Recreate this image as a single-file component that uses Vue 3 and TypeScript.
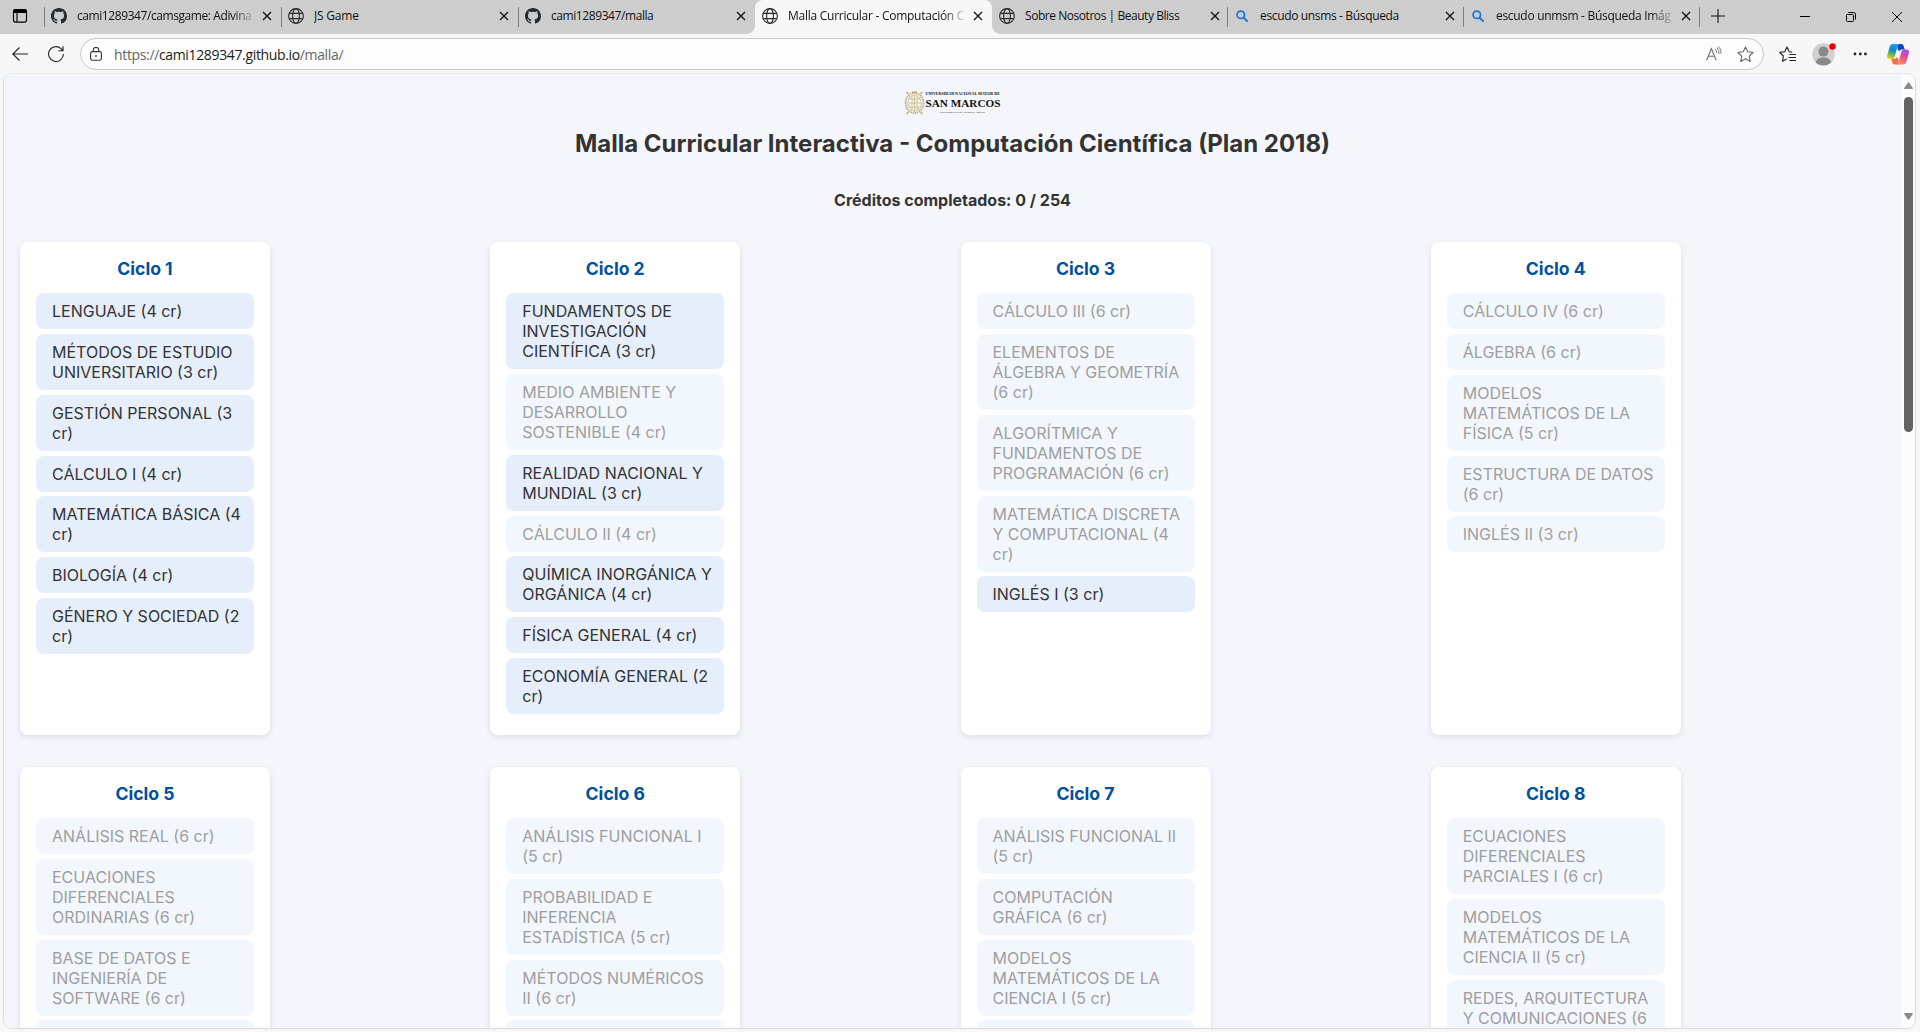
<script setup lang="ts">
interface Tab {
  title: string
  icon: 'github' | 'globe' | 'search'
  width: number
  space: string
  active?: boolean
  sep?: boolean
  fade?: boolean
}

const tabs: Tab[] = [
  { title: 'cami1289347/camsgame: Adivina', icon: 'github', width: 237, space: '-0.42px', sep: true, fade: true },
  { title: 'JS Game', icon: 'globe', width: 237, space: '-0.2px', sep: true },
  { title: 'cami1289347/malla', icon: 'github', width: 237, space: '-0.42px' },
  { title: 'Malla Curricular - Computación C', icon: 'globe', width: 237, space: '-0.26px', active: true, fade: true },
  { title: 'Sobre Nosotros | Beauty Bliss', icon: 'globe', width: 235, space: '-0.45px', sep: true },
  { title: 'escudo unsms - Búsqueda', icon: 'search', width: 236, space: '-0.35px', sep: true },
  { title: 'escudo unmsm - Búsqueda Imág', icon: 'search', width: 236, space: '-0.3px', sep: true, fade: true },
]

interface Course {
  name: string
  cr: number
  open?: boolean
}

const c = (name: string, cr: number, open = false): Course => ({ name, cr, open })

const cycles: Course[][] = [
  [
    c('LENGUAJE', 4, true),
    c('MÉTODOS DE ESTUDIO UNIVERSITARIO', 3, true),
    c('GESTIÓN PERSONAL', 3, true),
    c('CÁLCULO I', 4, true),
    c('MATEMÁTICA BÁSICA', 4, true),
    c('BIOLOGÍA', 4, true),
    c('GÉNERO Y SOCIEDAD', 2, true),
  ],
  [
    c('FUNDAMENTOS DE INVESTIGACIÓN CIENTÍFICA', 3, true),
    c('MEDIO AMBIENTE Y DESARROLLO SOSTENIBLE', 4),
    c('REALIDAD NACIONAL Y MUNDIAL', 3, true),
    c('CÁLCULO II', 4),
    c('QUÍMICA INORGÁNICA Y ORGÁNICA', 4, true),
    c('FÍSICA GENERAL', 4, true),
    c('ECONOMÍA GENERAL', 2, true),
  ],
  [
    c('CÁLCULO III', 6),
    c('ELEMENTOS DE ÁLGEBRA Y GEOMETRÍA', 6),
    c('ALGORÍTMICA Y FUNDAMENTOS DE PROGRAMACIÓN', 6),
    c('MATEMÁTICA DISCRETA Y COMPUTACIONAL', 4),
    c('INGLÉS I', 3, true),
  ],
  [
    c('CÁLCULO IV', 6),
    c('ÁLGEBRA', 6),
    c('MODELOS MATEMÁTICOS DE LA FÍSICA', 5),
    c('ESTRUCTURA DE DATOS', 6),
    c('INGLÉS II', 3),
  ],
  [
    c('ANÁLISIS REAL', 6),
    c('ECUACIONES DIFERENCIALES ORDINARIAS', 6),
    c('BASE DE DATOS E INGENIERÍA DE SOFTWARE', 6),
    c('', 0),
  ],
  [
    c('ANÁLISIS FUNCIONAL I', 5),
    c('PROBABILIDAD E INFERENCIA ESTADÍSTICA', 5),
    c('MÉTODOS NUMÉRICOS II', 6),
    c('', 0),
  ],
  [
    c('ANÁLISIS FUNCIONAL II', 5),
    c('COMPUTACIÓN GRÁFICA', 6),
    c('MODELOS MATEMÁTICOS DE LA CIENCIA I', 5),
    c('', 0),
  ],
  [
    c('ECUACIONES DIFERENCIALES PARCIALES I', 6),
    c('MODELOS MATEMÁTICOS DE LA CIENCIA II', 5),
    c('REDES, ARQUITECTURA Y COMUNICACIONES', 6),
  ],
]
</script>

<template>
  <div class="window">
    <div class="tabstrip">
      <div class="workspace">
        <svg width="16" height="16" viewBox="0 0 16 16">
          <rect x="1.5" y="1.5" width="13" height="12.6" rx="2.2" fill="none" stroke="#000" stroke-width="1.1" />
          <path d="M1 5V3.4A2.4 2.4 0 0 1 3.4 1h9.2A2.4 2.4 0 0 1 15 3.4V5z" fill="#000" />
          <path d="M5 4v10" stroke="#000" stroke-width="1.1" />
        </svg>
      </div>
      <div
        v-for="(t, i) in tabs"
        :key="i"
        class="tab"
        :class="{ active: t.active, sep: t.sep }"
        :style="{ width: t.width + 'px' }"
      >
        <svg v-if="t.icon === 'github'" class="fav" viewBox="0 0 16 16">
          <path
            fill="#24292f"
            d="M8 0C3.58 0 0 3.58 0 8c0 3.54 2.29 6.53 5.47 7.59.4.07.55-.17.55-.38 0-.19-.01-.82-.01-1.49-2.01.37-2.53-.49-2.69-.94-.09-.23-.48-.94-.82-1.13-.28-.15-.68-.52-.01-.53.63-.01 1.08.58 1.23.82.72 1.21 1.87.87 2.33.66.07-.52.28-.87.51-1.07-1.78-.2-3.64-.89-3.64-3.95 0-.87.31-1.59.82-2.15-.08-.2-.36-1.02.08-2.12 0 0 .67-.21 2.2.82.64-.18 1.32-.27 2-.27s1.36.09 2 .27c1.53-1.04 2.2-.82 2.2-.82.44 1.1.16 1.92.08 2.12.51.56.82 1.27.82 2.15 0 3.07-1.87 3.75-3.65 3.95.29.25.54.73.54 1.48 0 1.07-.01 1.93-.01 2.2 0 .21.15.46.55.38A8.01 8.01 0 0 0 16 8c0-4.42-3.58-8-8-8z"
          />
        </svg>
        <svg v-else-if="t.icon === 'globe'" class="fav" viewBox="0 0 16 16" fill="none" stroke="#2b2b2b" stroke-width="1.1">
          <circle cx="8" cy="8" r="7.4" />
          <ellipse cx="8" cy="8" rx="3.4" ry="7.4" />
          <path d="M1.3 5.4h13.4M1.3 10.6h13.4" />
        </svg>
        <svg v-else class="fav" viewBox="0 0 16 16" fill="none" stroke="#1374d4" stroke-width="1.7">
          <circle cx="6.8" cy="6.8" r="3.7" />
          <path d="M9.6 9.6l4 4" stroke-width="2" />
        </svg>
        <span class="tab-title" :class="{ fade: t.fade }" :style="{ letterSpacing: t.space }">{{ t.title }}</span>
        <svg class="close" viewBox="0 0 10 10" stroke="#111" stroke-width="1.3">
          <path d="M1 1l8 8M9 1l-8 8" />
        </svg>
      </div>
      <svg class="plus" width="14" height="14" viewBox="0 0 14 14" stroke="#111" stroke-width="1.1"><path d="M0 7h14M7 0v14" /></svg>
      <div class="controls">
        <svg width="10" height="10" viewBox="0 0 10 10" stroke="#000"><path d="M0 4.5h10" /></svg>
        <svg width="10" height="10" viewBox="0 0 10 10" fill="none" stroke="#000">
          <rect x=".5" y="2.5" width="7" height="7" rx="1" />
          <path d="M2.5 .5h5a2 2 0 0 1 2 2v5" />
        </svg>
        <svg width="10" height="10" viewBox="0 0 10 10" stroke="#000"><path d="M0 0l10 10M10 0L0 10" /></svg>
      </div>
    </div>

    <div class="toolbar">
      <svg class="back" width="16" height="14" viewBox="0 0 16 14" fill="none" stroke="#222" stroke-width="1.1">
        <path d="M7.5 .5L.8 7l6.7 6.5M.8 7H16" />
      </svg>
      <svg class="reload" width="16" height="16" viewBox="0 0 16 16" fill="none" stroke="#222" stroke-width="1.1">
        <path d="M15.4 8A7.4 7.4 0 1 1 13 2.6L14.8 4.4M15 .2v4.6h-4.6" />
      </svg>
      <div class="omnibox">
        <svg width="12" height="14" viewBox="0 0 12 14" fill="none" stroke="#333" stroke-width="1.1">
          <rect x=".6" y="4.6" width="10.8" height="8.6" rx="1.6" />
          <path d="M3.2 4.5V3.2a2.8 2.8 0 0 1 5.6 0v1.3" />
          <circle cx="6" cy="8.9" r=".9" fill="#333" stroke="none" />
        </svg>
        <span class="url"><i>https://</i>cami1289347.github.io<i>/malla/</i></span>
        <svg class="read" width="16" height="16" viewBox="0 0 16 16" fill="none" stroke="#707070" stroke-width="1.1">
          <path d="M.6 14.200L5.400 2.700l4.800 11.500M2.300 10.200h6.200" />
          <path d="M9.300 3.200q1.500 1.500 1.200 3.600M10.900 1.500q2.600 2.600 2 6.400M12.600 .4q3 3.400 2.400 7.200" stroke-width=".9" />
        </svg>
        <svg class="star" width="17" height="17" viewBox="0 0 17 17" fill="none" stroke="#666" stroke-width="1.1" stroke-linejoin="round">
          <path d="M8.5 1l2.3 4.8 5.3.7-3.9 3.6 1 5.3-4.7-2.6-4.7 2.6 1-5.3L.9 6.500l5.300-.7z" />
        </svg>
      </div>
      <svg class="favs" width="17" height="17" viewBox="0 0 17 17" fill="none" stroke="#222" stroke-width="1.1" stroke-linejoin="round">
        <path d="M13.200 6.100L10.300 5.700 8 1 5.700 5.700.7 6.400l3.700 3.600-.9 5.300L7.700 13" />
        <path d="M10.500 8.500H17M9.500 11.500H17M10.500 14.500H17" />
      </svg>
      <svg class="avatar" width="24" height="24" viewBox="0 0 24 24">
        <circle cx="11.400" cy="12.500" r="11.200" fill="#d2d0ce" />
        <circle cx="11.400" cy="9.600" r="5" fill="#8a8886" />
        <path d="M3.700 20.200c1-3.500 4-4.700 7.700-4.700s6.700 1.200 7.700 4.700a11 11 0 0 1-15.400 0z" fill="#8a8886" />
        <circle cx="20.500" cy="4.500" r="3.200" fill="#e60000" />
      </svg>
      <svg class="dots" width="14" height="4" viewBox="0 0 14 4" fill="#222">
        <circle cx="2" cy="2" r="1.400" /><circle cx="7.300" cy="2" r="1.400" /><circle cx="12.400" cy="2" r="1.400" />
      </svg>
      <svg class="copilot" width="22" height="21" viewBox="0 0 22 21">
        <defs>
          <linearGradient id="ga" x1=".6" y1="0" x2=".3" y2="1">
            <stop offset="0" stop-color="#1a9fea" /><stop offset=".4" stop-color="#1684d8" />
            <stop offset=".7" stop-color="#5cb85a" /><stop offset="1" stop-color="#ffd000" />
          </linearGradient>
          <linearGradient id="gb" x1=".7" y1="0" x2=".3" y2="1">
            <stop offset="0" stop-color="#a44be8" /><stop offset=".5" stop-color="#ec4a8e" />
            <stop offset="1" stop-color="#ff9a4c" />
          </linearGradient>
        </defs>
        <path d="M10 0h4.300c1.400 0 1.900.8 2.200 1.700l1.300 3.800h-2.600c-1.500 0-2.400.5-2.900 2L10.600 5z" fill="#1240c0" />
        <path d="M5.500 0h7.200c-1.200.5-1.700 1.300-2.100 2.600L7.600 12.400c-.4 1.400-1 2.600-2.600 2.600H2.800C.6 15-.5 13.500.2 11.200L2.700 2.800C3.200 1.100 4 0 5.500 0z" fill="url(#ga)" />
        <path d="M12 20.500H7.700c-1.400 0-1.900-.8-2.200-1.700L4.300 15H6.500c1.700 0 2.600-.7 3.100-2.200l1.800 2.700z" fill="#fa6a50" />
        <path d="M16.500 20.500H9.300c1.200-.5 1.700-1.300 2.100-2.600L14.400 8.100c.4-1.400 1-2.600 2.600-2.600h2.200c2.200 0 3.300 1.600 2.600 3.900l-2.500 8.300c-.5 1.700-1.300 2.800-2.800 2.800z" fill="url(#gb)" />
      </svg>
    </div>

    <div class="viewport">
      <main class="page">
        <header>
          <div class="logo">
            <svg width="21" height="26" viewBox="0 0 21 26" fill="none" stroke="#b8ab72">
              <ellipse cx="10.500" cy="13" rx="9" ry="10" stroke-width="1.600" stroke-dasharray="1.500 .7" />
              <ellipse cx="10.500" cy="13" rx="6.600" ry="8" stroke="#cfc69c" stroke-width="1.500" stroke-dasharray="2 .8" />
              <path d="M5 9h11M5 13h11M6 17h9M8 6v14M10.500 5v17M13 6v14" stroke="#c9bf8e" stroke-width=".9" />
              <path d="M2.500 2l2 2M18.500 2l-2 2M2.500 24l2-2M18.500 24l-2-2M8 2.200h5" stroke-width="1.500" />
            </svg>
            <div class="logo-text">
              <span class="l1">UNIVERSIDAD NACIONAL MAYOR DE</span>
              <span class="l2">SAN MARCOS</span>
              <span class="l3">Universidad del Perú, Decana de América</span>
            </div>
          </div>
          <h1>Malla Curricular Interactiva - Computación Científica (Plan 2018)</h1>
          <p class="credits">Créditos completados: 0 / 254</p>
        </header>
        <div class="grid">
          <section v-for="(list, i) in cycles" :key="i" class="card">
            <h2>Ciclo {{ i + 1 }}</h2>
            <div v-for="(k, j) in list" :key="j" class="course" :class="{ locked: !k.open }">
              <template v-if="k.name">{{ k.name }} ({{ k.cr }} cr)</template>
            </div>
          </section>
        </div>
      </main>
      <div class="scrollbar">
        <svg width="9" height="8" viewBox="0 0 9 8"><path d="M3.600 1q.9-1.300 1.800 0L8.800 6q.5 1-.8 1H1Q-.3 7 .2 6z" fill="#8b8b8b" /></svg>
        <div class="thumb"></div>
        <svg class="down" width="9" height="8" viewBox="0 0 9 8"><path d="M3.600 7q.9 1.300 1.800 0L8.800 2q.5-1-.8-1H1Q-.3 1 .2 2z" fill="#8b8b8b" /></svg>
      </div>
    </div>
  </div>
</template>

<style>
body {
  margin: 0;
  overflow: hidden;
}
</style>

<style scoped>
* {
  box-sizing: border-box;
}
svg {
  display: block;
  flex: none;
}
.window {
  width: 1920px;
  height: 1032px;
  background: #f7f7f7;
  display: flex;
  flex-direction: column;
  overflow: hidden;
  font-family: 'Open Sans', 'Noto Sans', sans-serif;
}
.tabstrip {
  height: 34px;
  flex: none;
  background: #cdcdcd;
  display: flex;
}
.workspace {
  width: 44px;
  padding: 8px 0 0 12px;
  position: relative;
}
.workspace::after,
.tab.sep::after {
  content: '';
  position: absolute;
  right: -1px;
  top: 7px;
  width: 1px;
  height: 20px;
  background: #7d7d7d;
}
.tab {
  position: relative;
  flex: none;
  height: 34px;
  display: flex;
  align-items: center;
  padding: 0 10px 2px 7px;
}
.tab.active {
  background: #f7f7f7;
  border-radius: 8px 8px 0 0;
}
.tab.active::before,
.tab.active::after {
  content: '';
  position: absolute;
  bottom: 0;
  width: 8px;
  height: 8px;
}
.tab.active::before {
  left: -8px;
  background: radial-gradient(circle at 0 0, transparent 7.5px, #f7f7f7 8px);
}
.tab.active::after {
  right: -8px;
  background: radial-gradient(circle at 100% 0, transparent 7.5px, #f7f7f7 8px);
}
.fav {
  width: 16px;
  height: 16px;
}
.tab-title {
  margin-left: 10px;
  width: 177px;
  flex: none;
  overflow: hidden;
  white-space: nowrap;
  font-size: 12px;
  line-height: 20px;
  color: #111;
}
.tab-title.fade {
  mask-image: linear-gradient(to right, #000 155px, transparent 180px);
}
.close {
  width: 10px;
  height: 10px;
  margin-left: 8px;
}
.plus {
  margin: 9px 0 0 12px;
}
.controls {
  margin-left: auto;
  margin-right: 18px;
  display: flex;
  gap: 36px;
  padding-top: 12px;
}
.toolbar {
  height: 40px;
  flex: none;
  display: flex;
  align-items: center;
  padding-left: 12px;
}
.reload {
  margin-left: 20px;
}
.omnibox {
  margin-left: 16px;
  width: 1684px;
  height: 32px;
  border: 1px solid #c8c8c8;
  border-radius: 16px;
  background: #fdfdfd;
  display: flex;
  align-items: center;
  padding-left: 9px;
}
.url {
  margin-left: 12px;
  font-size: 14px;
  letter-spacing: -0.35px;
  color: #1b1b1b;
  flex: 1;
}
.url i {
  font-style: normal;
  color: #666;
}
.star {
  margin: 0 9px 0 15px;
}
.favs {
  margin-left: 15px;
}
.avatar {
  margin-left: 16px;
}
.dots {
  margin-left: 17px;
}
.copilot {
  margin-left: 20px;
}
.viewport {
  width: 1913px;
  height: 956px;
  margin-left: 3px;
  margin-top: -1px;
  border: 1px solid #dcdcdc;
  border-top-color: #e8e8e8;
  border-radius: 9px;
  overflow: hidden;
  display: flex;
  background: #fcfcfc;
}
.page {
  width: 1897px;
  flex: none;
  background: #f4f6fb;
  padding: 16px;
  font-family: 'Inter', sans-serif;
  color: #333;
}
header {
  height: 152px;
  display: flex;
  flex-direction: column;
  align-items: center;
}
.logo {
  height: 26px;
  display: flex;
  width: 98px;
}
.logo-text {
  position: relative;
  width: 76px;
  margin-left: 1px;
  font-family: 'Liberation Serif', serif;
  color: #111;
  white-space: nowrap;
}
.logo-text span {
  position: absolute;
  left: 0;
}
.l1 {
  top: 1px;
  font-size: 4.050px;
  line-height: 5px;
  font-weight: 700;
}
.l2 {
  top: 7px;
  font-size: 11.200px;
  line-height: 13px;
  font-weight: 700;
}
.logo-text .l3 {
  left: 14px;
  top: 21px;
  font-size: 2.700px;
  line-height: 4px;
}
h1 {
  margin: 13px 0 0;
  font-size: 24px;
  line-height: 30px;
  font-weight: 700;
  white-space: nowrap;
}
.credits {
  margin: 31px 0 0;
  font-size: 16px;
  line-height: 20px;
  font-weight: 700;
}
.grid {
  display: grid;
  grid-template-columns: repeat(4, 1fr);
  gap: 32px 16px;
}
.card {
  width: 250px;
  background: #fff;
  border-radius: 8px;
  padding: 16px;
  box-shadow: 0 2px 6px rgba(0, 0, 0, 0.1);
}
h2 {
  margin: 0 0 13.200px;
  font-size: 17.600px;
  line-height: 22px;
  font-weight: 700;
  text-align: center;
  color: #0050a0;
}
.course {
  margin-bottom: 4.800px;
  min-height: 36px;
  padding: 8px 8px 8px 16px;
  border-radius: 8px;
  background: #e6eefb;
  font-size: 16px;
  line-height: 20px;
}
.course.locked {
  background: #f2f7fe;
  color: #9e9e9e;
}
.scrollbar {
  width: 15px;
  display: flex;
  flex-direction: column;
  padding: 8px 0 8px 3px;
}
.thumb {
  width: 9px;
  height: 335px;
  margin-top: 7px;
  border-radius: 5px;
  background: #636363;
}
.down {
  margin-top: auto;
}
</style>
